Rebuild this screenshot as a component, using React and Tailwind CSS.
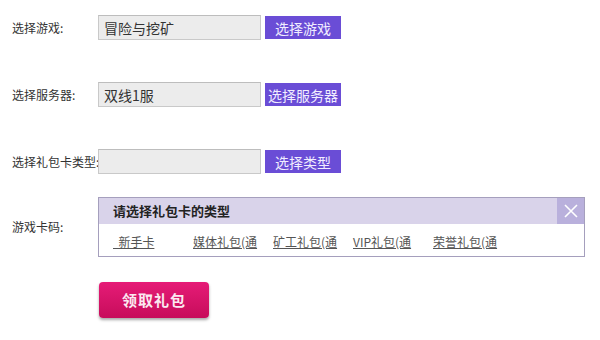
import React from "react";

const font = { fontFamily: '"Microsoft YaHei", "Noto Sans CJK SC", "Noto Sans", sans-serif' };

function Row({ label, value, btn, className = "" }) {
  return (
    <div className={"flex items-center h-[25px] " + className}>
      <div className="w-[86px] shrink-0 whitespace-nowrap text-[12px] text-[#333]">{label}</div>
      <div className="w-[163px] h-[25px] shrink-0 bg-[#ececec] border border-[#c9c9c9] border-t-[#bdbdbd] text-[14px] text-[#333] pl-[5px] flex items-center leading-none">
        {value}
      </div>
      <div className="ml-[4px] w-[76px] h-[23px] shrink-0 bg-[#6a4dd6] text-[#f1edff] text-[14px] flex items-center justify-center whitespace-nowrap leading-none">
        {btn}
      </div>
    </div>
  );
}

export default function App() {
  const links = ["  新手卡", "媒体礼包(通", "矿工礼包(通", "VIP礼包(通", "荣誉礼包(通"];
  return (
    <div className="w-[600px] h-[340px] bg-white pl-[12px] pt-[15px] overflow-hidden" style={font}>
      <Row label="选择游戏:" value="冒险与挖矿" btn="选择游戏" />
      <Row label="选择服务器:" value="双线1服" btn="选择服务器" className="mt-[42px]" />
      <Row label="选择礼包卡类型:" value="" btn="选择类型" className="mt-[42px]" />
      <div className="flex items-center mt-[23px]">
        <div className="w-[86px] shrink-0 whitespace-nowrap text-[12px] text-[#333]">游戏卡码:</div>
        <div className="w-[487px] h-[60px] border border-[#a59fbd] flex flex-col">
          <div className="h-[26px] bg-[#d9d3ea] flex items-center justify-between">
            <div className="pl-[14px] text-[13px] font-bold text-[#222]">请选择礼包卡的类型</div>
            <div className="w-[27px] h-[26px] bg-[#b9b0dc] flex items-center justify-center">
              <svg width="14" height="14" viewBox="0 0 14 14">
                <path d="M1 1 L13 13 M13 1 L1 13" stroke="#ffffff" strokeWidth="1.6" />
              </svg>
            </div>
          </div>
          <div className="flex-1 flex items-center pl-[14px] bg-white">
            {links.map((l, i) => (
              <div key={i} className="w-[80px] shrink-0">
                <span className="whitespace-pre text-[12px] text-[#555] underline leading-none pb-[1px]">
                  {l}
                </span>
              </div>
            ))}
          </div>
        </div>
      </div>
      <div className="ml-[87px] mt-[25px] w-[110px] h-[36px] rounded-[4px] bg-gradient-to-b from-[#e61b77] to-[#c70c5b] shadow-[0_2px_3px_rgba(0,0,0,0.35)] flex items-center justify-center text-[#fbe9f1] text-[15px] font-bold tracking-[1px]">
        领取礼包
      </div>
    </div>
  );
}
